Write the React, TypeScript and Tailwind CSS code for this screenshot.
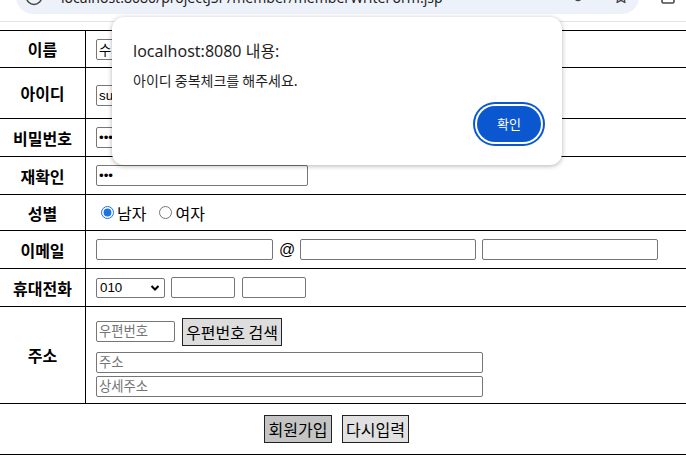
import React from "react";

const korean = "font-['Noto_Sans_CJK_KR','Noto_Sans',sans-serif]";
const inputBase =
  "h-[21px] border border-[#767676] rounded-[2px] px-[2px] text-[13.33px] leading-none text-black bg-white outline-none font-['Liberation_Sans','Noto_Sans_CJK_KR',sans-serif] placeholder:text-[#757575]";

interface RowProps {
  label: string;
  height: string;
  children: React.ReactNode;
}

const Row = ({ label, height, children }: RowProps) => (
  <div className={`flex border-t border-black ${height}`}>
    <div className="w-[86px] shrink-0 border-r border-black flex items-center justify-center font-bold text-[16px] text-black">
      {label}
    </div>
    <div className="flex-1 flex items-center pl-[10px]">{children}</div>
  </div>
);

const BrowserBar = () => (
  <div className="h-[22px] border-b border-[#e3e3e3] overflow-hidden bg-white">
    <div className="flex items-center -mt-[20px] h-[34px]">
      <div className="ml-[16px] w-[623px] h-[34px] rounded-full bg-[#edf2fa] flex items-center pl-[8px] pr-[10px]">
        <svg width="20" height="20" viewBox="0 0 20 20" className="shrink-0">
          <circle cx="10" cy="10" r="7.5" fill="none" stroke="#474747" strokeWidth="1.6" />
        </svg>
        <span className="ml-[17px] text-[14px] text-[#1f1f1f] font-['Noto_Sans',sans-serif] whitespace-nowrap">
          localhost:8080/projectJSP/member/memberWriteForm.jsp
        </span>
        <div className="flex-1" />
        <svg width="20" height="20" viewBox="0 0 20 20" className="shrink-0 mr-[20px]">
          <circle cx="5" cy="10" r="3.5" fill="none" stroke="#474747" strokeWidth="1.6" />
          <path d="M9 10h9M15 10v3M12 10v2" stroke="#474747" strokeWidth="1.6" fill="none" />
        </svg>
        <svg width="16" height="16" viewBox="0 0 16 16" className="shrink-0">
          <path
            d="M8 1.5l1.9 4.1 4.4.5-3.3 3 .9 4.4L8 11.3l-3.9 2.2.9-4.4-3.3-3 4.4-.5z"
            fill="none"
            stroke="#474747"
            strokeWidth="1.4"
            strokeLinejoin="round"
          />
        </svg>
      </div>
      <svg width="16" height="20" viewBox="0 0 16 20" className="ml-[21px] shrink-0">
        <rect x="2" y="3" width="12" height="13" rx="1.5" fill="none" stroke="#474747" strokeWidth="1.6" />
      </svg>
    </div>
  </div>
);

const AlertDialog = () => (
  <div className="absolute left-[112px] top-[17px] w-[450px] h-[148px] bg-white rounded-[12px] shadow-[0_1px_5px_rgba(0,0,0,0.3)] flex flex-col pl-[21px] pr-[21px] pt-[24px]">
    <div className="text-[16px] leading-[20px] text-[#1f1f1f] font-['Noto_Sans','Noto_Sans_CJK_KR',sans-serif]">
      localhost:8080 내용:
    </div>
    <div className={`mt-[9px] text-[14px] leading-[20px] text-[#1f1f1f] ${korean}`}>
      아이디 중복체크를 해주세요.
    </div>
    <div className="flex justify-end mt-[16px]">
      <button
        className={`w-[64px] h-[36px] rounded-full bg-[#0b57d0] text-white text-[13px] ring-2 ring-[#0b57d0] ring-offset-2 ring-offset-white ${korean}`}
      >
        확인
      </button>
    </div>
  </div>
);

const App = () => {
  return (
    <div className={`relative w-[686px] h-[455px] overflow-hidden bg-white text-black ${korean}`}>
      <BrowserBar />

      <div className="mt-[8px]">
        <Row label="이름" height="h-[37px]">
          <input className={`${inputBase} w-[212px] bg-[#e8f0fe]`} defaultValue="수지" />
        </Row>
        <Row label="아이디" height="h-[51px]">
          <input className={`${inputBase} w-[212px] mt-[4px]`} defaultValue="suji" />
        </Row>
        <Row label="비밀번호" height="h-[38px]">
          <input type="password" className={`${inputBase} w-[212px]`} defaultValue="123" />
        </Row>
        <Row label="재확인" height="h-[38px]">
          <input type="password" className={`${inputBase} w-[212px]`} defaultValue="123" />
        </Row>
        <Row label="성별" height="h-[36px]">
          <label className="flex items-center text-[16px] ml-[5px]">
            <input type="radio" name="gender" defaultChecked className="w-[13px] h-[13px] mr-[3px] accent-[#1a73e8]" />
            남자
          </label>
          <label className="flex items-center text-[16px] ml-[13px]">
            <input type="radio" name="gender" className="w-[13px] h-[13px] mr-[3px]" />
            여자
          </label>
        </Row>
        <Row label="이메일" height="h-[38px]">
          <input className={`${inputBase} w-[177px]`} />
          <span className="ml-[6px] mr-[5px] text-[16px] font-['Liberation_Sans',sans-serif]">@</span>
          <input className={`${inputBase} w-[176px]`} />
          <input className={`${inputBase} w-[176px] ml-[6px]`} />
        </Row>
        <Row label="휴대전화" height="h-[38px]">
          <div className="w-[69px] h-[20px] border border-[#767676] rounded-[2px] flex items-center pl-[3px] text-[13.33px] font-['Liberation_Sans',sans-serif]">
            010
            <svg width="10" height="8" viewBox="0 0 10 8" className="ml-auto mr-[4px]">
              <path d="M1.5 2l3.5 3.5L8.5 2" fill="none" stroke="#000" strokeWidth="2" />
            </svg>
          </div>
          <input className={`${inputBase} w-[64px] ml-[6px]`} />
          <input className={`${inputBase} w-[64px] ml-[7px]`} />
        </Row>
        <Row label="주소" height="h-[97px]">
          <div className="flex flex-col pt-[4px]">
            <div className="flex items-center">
              <input className={`${inputBase} w-[79px]`} placeholder="우편번호" />
              <button className="ml-[7px] w-[100px] h-[28px] bg-[#dddddd] border border-[#222] text-[16px] leading-none">
                우편번호 검색
              </button>
            </div>
            <input className={`${inputBase} w-[387px] mt-[6px]`} placeholder="주소" />
            <input className={`${inputBase} w-[387px] mt-[3px]`} placeholder="상세주소" />
          </div>
        </Row>
        <div className="flex items-center justify-center gap-[10px] pr-[13px] h-[52px] border-t border-b border-black">
          <button className="w-[68px] h-[28px] bg-[#c4c4c4] border border-[#222] text-[16px] leading-none">
            회원가입
          </button>
          <button className="w-[67px] h-[28px] bg-[#e1e1e1] border border-[#222] text-[16px] leading-none">
            다시입력
          </button>
        </div>
      </div>

      <AlertDialog />
    </div>
  );
};

export default App;
